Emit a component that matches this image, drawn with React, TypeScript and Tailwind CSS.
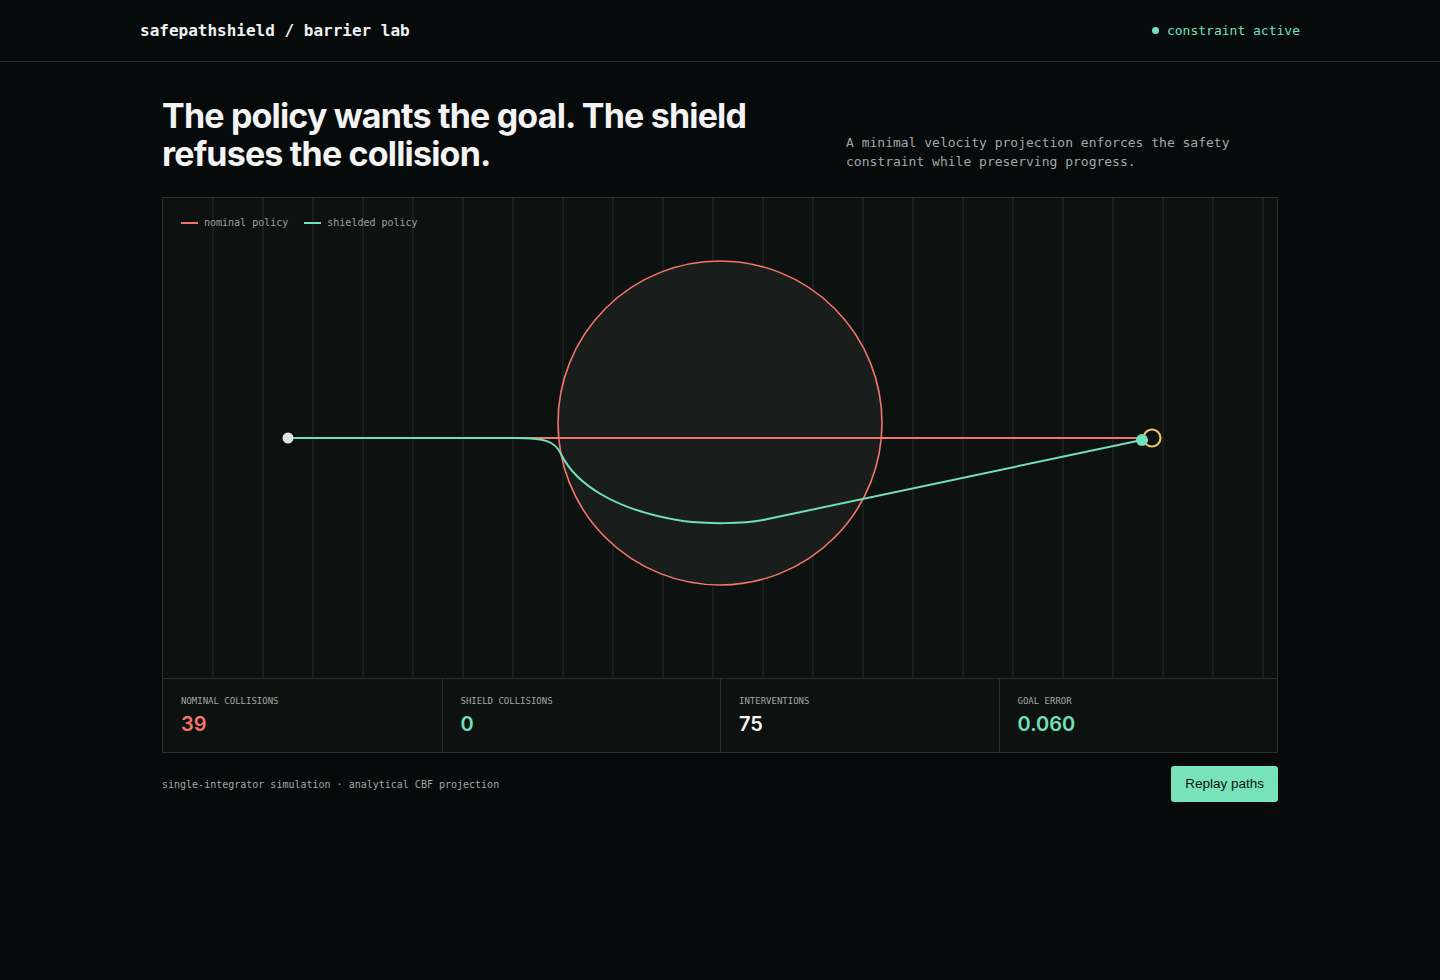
const mono = "font-['DejaVu_Sans_Mono',monospace]";
const sans = "font-['Inter',sans-serif]";

const gridXs = Array.from({ length: 22 }, (_, i) => (i + 1) * 50);

const stats = [
  { label: "Nominal collisions", value: "39", color: "text-[#f2776a]" },
  { label: "Shield collisions", value: "0", color: "text-[#72e0b8]" },
  { label: "Interventions", value: "75", color: "text-[#f3f4f3]" },
  { label: "Goal error", value: "0.060", color: "text-[#72e0b8]" },
];

const Chart = () => (
  <div className="relative h-[480px] w-full">
    <svg width="1114" height="480" viewBox="0 0 1114 480" className="absolute inset-0">
      {gridXs.map((x) => (
        <line key={x} x1={x} y1={0} x2={x} y2={480} stroke="#1a1f1d" strokeWidth="2" />
      ))}
      <circle cx="557" cy="225" r="162" fill="#191d1c" stroke="#f2776a" strokeWidth="1.6" />
      <line x1="125" y1="240" x2="979" y2="240" stroke="#f2776a" strokeWidth="2" />
      <path
        d="M125 240 L352 240 C382 240 392 243 398 256 C412 285 450 312 520 323 C545 326 580 326 600 322 L979 242"
        fill="none"
        stroke="#72e0b8"
        strokeWidth="2"
      />
      <circle cx="125" cy="240" r="5.5" fill="#dfe6e2" />
      <circle cx="989" cy="240" r="8.5" fill="none" stroke="#f0c35c" strokeWidth="2.2" />
      <circle cx="979" cy="242" r="6" fill="#72e0b8" />
    </svg>
    <div className={`absolute left-[18px] top-[17px] flex items-center gap-[16px] text-[10px] text-[#9aa29e] ${mono}`}>
      <div className="flex items-center gap-[6px]">
        <span className="h-[2px] w-[17px] bg-[#f2776a]" />
        nominal policy
      </div>
      <div className="flex items-center gap-[6px]">
        <span className="h-[2px] w-[17px] bg-[#72e0b8]" />
        shielded policy
      </div>
    </div>
  </div>
);

export default function App() {
  return (
    <div className={`min-h-[980px] bg-[#070a0b] text-[#f3f4f3] ${sans}`}>
      <header className="h-[62px] border-b border-[#2a2f2e]">
        <div className="mx-auto flex h-[61px] w-[1160px] items-center justify-between">
          <div className={`text-[16px] font-bold text-[#eef1ef] ${mono}`}>safepathshield / barrier lab</div>
          <div className={`flex items-center gap-[8px] text-[13px] text-[#72e0b8] ${mono}`}>
            <span className="h-[7px] w-[7px] rounded-full bg-[#72e0b8]" />
            constraint active
          </div>
        </div>
      </header>

      <main className="mx-auto w-[1116px] pt-[35px]">
        <div className="flex items-end justify-between pb-[24px]">
          <h1 className="w-[640px] text-[34px] font-bold leading-[38px] tracking-[-0.024em] text-[#f3f4f3]">
            The policy wants the goal. The shield refuses the collision.
          </h1>
          <p className={`mr-[30px] mb-[2px] w-[402px] text-[13px] leading-[19px] text-[#a1a8a5] ${mono}`}>
            A minimal velocity projection enforces the safety constraint while preserving progress.
          </p>
        </div>

        <section className="border border-[#2a302e] bg-[#0d1110]">
          <Chart />
          <div className="grid grid-cols-4 border-t border-[#2a302e]">
            {stats.map((s, i) => (
              <div
                key={s.label}
                className={`h-[73px] px-[18px] pt-[15px] ${i > 0 ? "border-l border-[#2a302e]" : ""}`}
              >
                <div className={`text-[9px] uppercase leading-[14px] text-[#a1a8a5] ${mono}`}>{s.label}</div>
                <div className={`mt-[3px] text-[20px] font-semibold leading-[26px] ${s.color}`}>{s.value}</div>
              </div>
            ))}
          </div>
        </section>

        <div className="mt-[13px] flex items-center justify-between">
          <div className={`text-[10px] text-[#a1a8a5] ${mono}`}>
            single-integrator simulation · analytical CBF projection
          </div>
          <button className="h-[36px] rounded-[3px] bg-[#78e3ba] px-[14px] font-['Liberation_Sans',Arial,sans-serif] text-[13.5px] text-[#0b1411]">
            Replay paths
          </button>
        </div>
      </main>
    </div>
  );
}
